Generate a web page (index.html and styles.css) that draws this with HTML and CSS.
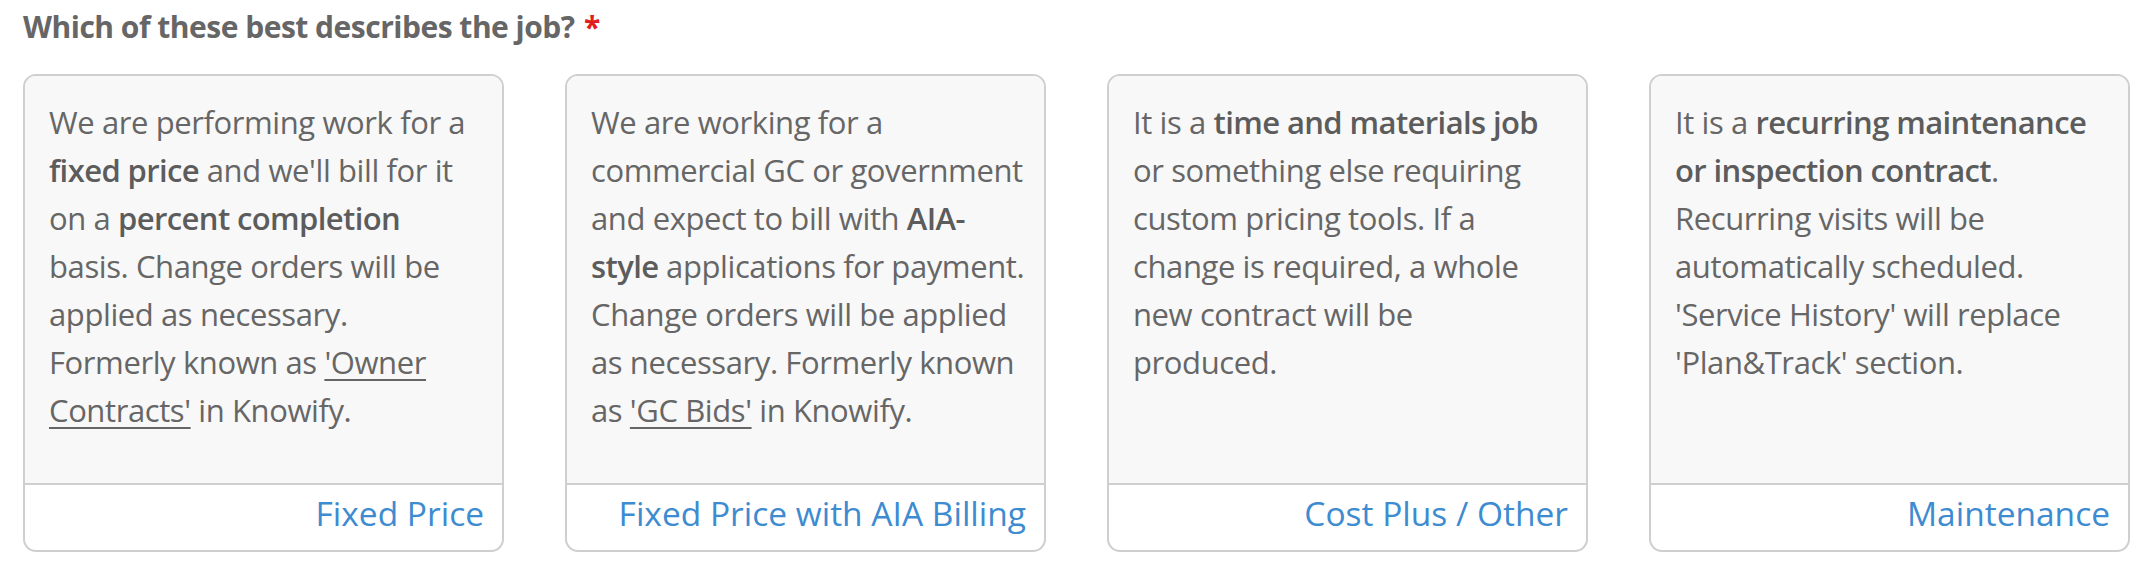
FILE: index.html
```html
<!DOCTYPE html>
<html>
<head>
<meta charset="utf-8">
<link rel="stylesheet" href="styles.css">
</head>
<body>
<div class="page">
  <h1 class="question">Which of these best describes the job? <span class="req">*</span></h1>
  <div class="cards">
    <div class="card">
      <div class="card-body">We are performing work for a<br><b>fixed price</b> and we'll bill for it<br>on a <b>percent completion</b><br>basis. Change orders will be<br>applied as necessary.<br>Formerly known as <u>'Owner<br>Contracts'</u> in Knowify.</div>
      <div class="card-foot">Fixed Price</div>
    </div>
    <div class="card">
      <div class="card-body">We are working for a<br>commercial GC or government<br>and expect to bill with <b>AIA-<br>style</b> applications for payment.<br>Change orders will be applied<br>as necessary. Formerly known<br>as <u>'GC Bids'</u> in Knowify.</div>
      <div class="card-foot">Fixed Price with AIA Billing</div>
    </div>
    <div class="card">
      <div class="card-body">It is a <b>time and materials job</b><br>or something else requiring<br>custom pricing tools. If a<br>change is required, a whole<br>new contract will be<br>produced.</div>
      <div class="card-foot">Cost Plus / Other</div>
    </div>
    <div class="card">
      <div class="card-body">It is a <b>recurring maintenance<br>or inspection contract</b>.<br>Recurring visits will be<br>automatically scheduled.<br>'Service History' will replace<br>'Plan&amp;Track' section.</div>
      <div class="card-foot">Maintenance</div>
    </div>
  </div>
</div>
</body>
</html>
```
FILE: styles.css
```css
html, body {
  margin: 0;
  padding: 0;
  background: #fff;
}
.page {
  padding: 8px 0 0 23px;
  font-family: "Open Sans", "Liberation Sans", sans-serif;
  color: #666;
}
.question {
  margin: 0;
  font-size: 30px;
  line-height: 38px;
  font-weight: 700;
  color: #666;
  letter-spacing: -0.5px;
}
.req {
  color: #e21d1d;
  margin-left: 2px;
}
.cards {
  display: grid;
  grid-template-columns: repeat(4, 481px);
  column-gap: 61px;
  margin-top: 28px;
}
.card {
  display: flex;
  flex-direction: column;
  border: 2px solid #cfcfcf;
  border-radius: 13px;
  overflow: hidden;
  background: #fff;
}
.card-body {
  height: 361px;
  padding: 22px 10px 24px 24px;
  background: #f8f8f8;
  font-size: 31px;
  line-height: 48px;
  letter-spacing: -0.4px;
  white-space: nowrap;
  border-bottom: 2px solid #cfcfcf;
}
.card-body b {
  font-weight: 600;
  color: #5c5c5c;
  letter-spacing: -0.6px;
}
.card-body u {
  text-decoration: underline;
  text-underline-offset: 5px;
  text-decoration-thickness: 2px;
}
.card-foot {
  height: 65px;
  line-height: 56px;
  text-align: right;
  padding-right: 18px;
  font-size: 33.5px;
  color: #3d8bd0;
}
```
